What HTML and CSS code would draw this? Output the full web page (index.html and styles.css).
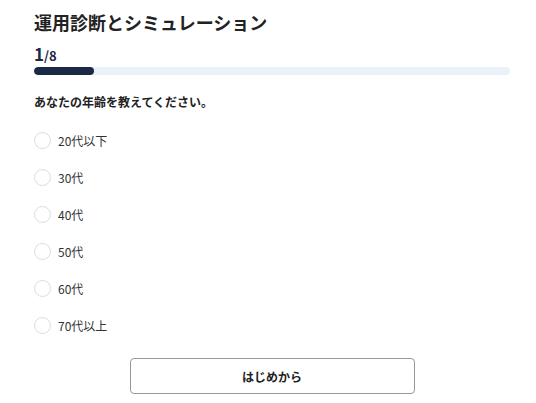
FILE: index.html
```html
<!DOCTYPE html>
<html lang="ja">
<head>
<meta charset="utf-8">
<link rel="stylesheet" href="styles.css">
</head>
<body>
<main class="page">
  <h1 class="title">運用診断とシミュレーション</h1>
  <div class="step"><span class="step-cur">1</span><span class="step-total">/8</span></div>
  <div class="progress"><div class="progress-fill" style="width:12.6%"></div></div>
  <p class="question">あなたの年齢を教えてください。</p>
  <ul class="options">
    <li class="option"><span class="radio"></span><span class="label">20代以下</span></li>
    <li class="option"><span class="radio"></span><span class="label">30代</span></li>
    <li class="option"><span class="radio"></span><span class="label">40代</span></li>
    <li class="option"><span class="radio"></span><span class="label">50代</span></li>
    <li class="option"><span class="radio"></span><span class="label">60代</span></li>
    <li class="option"><span class="radio"></span><span class="label">70代以上</span></li>
  </ul>
  <div class="actions"><button class="restart">はじめから</button></div>
</main>
</body>
</html>
```
FILE: styles.css
```css
* { box-sizing: border-box; }
html, body { margin: 0; padding: 0; background: #fff; }
body {
  font-family: "Noto Sans CJK JP", "Noto Sans", sans-serif;
  color: #222;
}
.page {
  padding: 8px 26px 0 34px;
}
.title {
  margin: 0;
  font-size: 18px;
  line-height: 28px;
  font-weight: 700;
  color: #222;
}
.step {
  margin-top: 8px;
  color: #1b2a44;
  font-weight: 700;
  line-height: 20px;
  height: 20px;
}
.step-cur { font-size: 17px; }
.step-total { font-size: 13px; }
.progress {
  margin-top: 3px;
  height: 8px;
  border-radius: 4px;
  background: #e8f2f8;
  overflow: hidden;
}
.progress-fill {
  height: 100%;
  background: #1b2a44;
  border-radius: 4px;
}
.question {
  margin: 18px 0 0;
  font-size: 12px;
  line-height: 18px;
  font-weight: 700;
  color: #222;
}
.options {
  list-style: none;
  margin: 19px 0 0;
  padding: 0;
  display: flex;
  flex-direction: column;
  gap: 17px;
}
.option {
  display: flex;
  align-items: center;
  gap: 7px;
  height: 20px;
  font-size: 12px;
  color: #333;
}
.radio {
  width: 17px;
  height: 17px;
  border: 1px solid #dcdcdc;
  border-radius: 50%;
  background: #fff;
  flex: none;
}
.actions {
  display: flex;
  justify-content: center;
  margin-top: 23px;
}
.restart {
  width: 285px;
  height: 36px;
  border: 1px solid #999;
  border-radius: 4px;
  background: #fff;
  font-family: inherit;
  font-size: 12px;
  font-weight: 700;
  color: #222;
}
```
